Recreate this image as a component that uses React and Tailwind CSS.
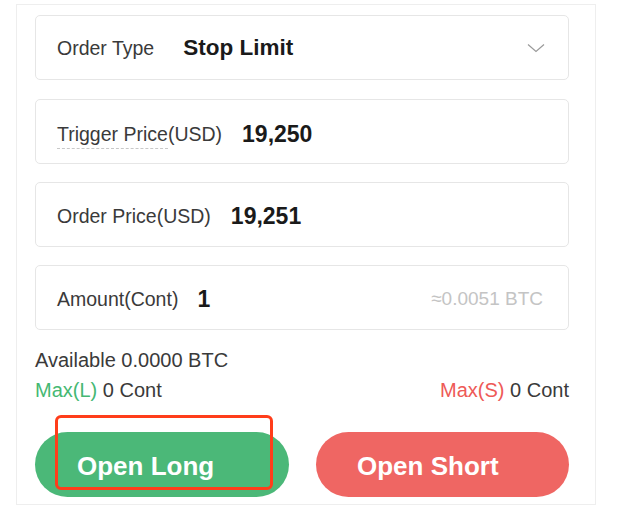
import React from "react";

function Box({ children, className = "" }) {
  return (
    <div
      className={
        "w-[534px] h-[65px] rounded-[5px] border border-[#e6e6e6] bg-white flex items-center pl-[21px] pr-[25px] " +
        className
      }
    >
      {children}
    </div>
  );
}

export default function App() {
  return (
    <div
      className="w-[624px] h-[520px] bg-white relative"
      style={{ fontFamily: '"Liberation Sans", Arial, sans-serif' }}
    >
      <div className="ml-[16px] pt-[4px]">
        <div className="w-[580px] h-[501px] border border-[#eeeeee] pl-[18px] pt-[10px]">
          <Box>
            <span className="text-[19.5px] text-[#3a3a3a] leading-[22px] pt-[1px]">Order Type</span>
            <span className="ml-[29px] text-[22.5px] font-bold text-[#1a1a1a] leading-[26px] pt-[1px]">Stop Limit</span>
            <svg className="ml-auto mr-[-2px]" width="18" height="10" viewBox="0 0 18 10" fill="none">
              <path d="M1 1.5 L9 8.5 L17 1.5" stroke="#9a9a9a" strokeWidth="1.2" />
            </svg>
          </Box>
          <Box className="mt-[19px]">
            <span className="text-[19.5px] text-[#3a3a3a] leading-[22px] pt-[4px]">
              <span className="border-b border-dashed border-[#c8c8c8] pb-[3px]">Trigger Price</span>(USD)
            </span>
            <span className="ml-[20px] text-[23px] font-bold text-[#1a1a1a] leading-[26px] pt-[4px]">19,250</span>
          </Box>
          <Box className="mt-[18px]">
            <span className="text-[19.5px] text-[#3a3a3a] leading-[22px] pt-[3px]">Order Price(USD)</span>
            <span className="ml-[20px] text-[23px] font-bold text-[#1a1a1a] leading-[26px] pt-[3px]">19,251</span>
          </Box>
          <Box className="mt-[18px]">
            <span className="text-[19.5px] text-[#3a3a3a] leading-[22px] pt-[3px]">Amount(Cont)</span>
            <span className="ml-[19px] text-[23px] font-bold text-[#1a1a1a] leading-[26px] pt-[3px]">1</span>
            <span className="ml-auto text-[19px] text-[#c4c4c4] leading-[22px] pt-[3px]">≈0.0051 BTC</span>
          </Box>
          <div className="mt-[19px] text-[20px] text-[#3a3a3a] leading-[22px]">Available 0.0000 BTC</div>
          <div className="w-[534px] mt-[8px] flex justify-between text-[20px] leading-[22px]">
            <span>
              <span className="text-[#45b873]">Max(L)</span>
              <span className="text-[#3a3a3a]"> 0 Cont</span>
            </span>
            <span>
              <span className="text-[#ee5a57]">Max(S)</span>
              <span className="text-[#3a3a3a]"> 0 Cont</span>
            </span>
          </div>
          <div className="w-[534px] mt-[31px] flex justify-between">
            <div className="w-[254px] h-[65px] rounded-full bg-[#4bb878] flex items-center pl-[42px] pt-[3px] text-white text-[26px] font-bold">
              Open Long
            </div>
            <div className="w-[253px] h-[65px] rounded-full bg-[#ef6663] flex items-center pl-[41px] pt-[3px] text-white text-[26px] font-bold">
              Open Short
            </div>
          </div>
        </div>
      </div>
      <div className="absolute left-[55px] top-[415px] w-[218px] h-[75px] border-[3px] border-[#ff3d1a] rounded-[6px]" />
    </div>
  );
}
